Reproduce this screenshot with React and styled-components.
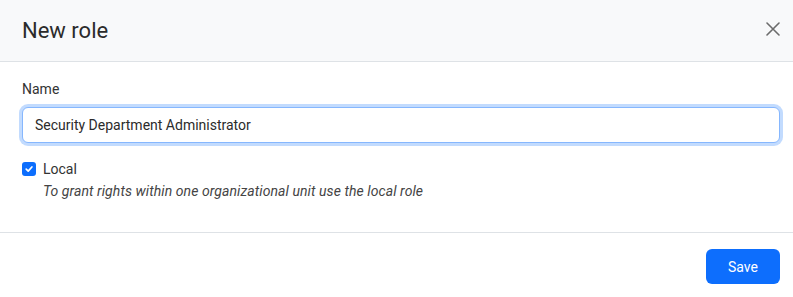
import styled, { createGlobalStyle } from "styled-components";

const GlobalStyle = createGlobalStyle`
  html, body {
    margin: 0;
    padding: 0;
    background: #ffffff;
  }

  body {
    font-family: Roboto, "Noto Sans", sans-serif;
    color: #212529;
  }

  * {
    box-sizing: border-box;
  }
`;

export default function App() {
  return (
    <>
      <GlobalStyle />
      <Modal>
        <Header>
          <Title>New role</Title>
          <CloseButton aria-label="Close">
            <svg width="14" height="14" viewBox="0 0 14 14">
              <path d="M1 1L13 13M13 1L1 13" stroke="#6c6c6c" strokeWidth="1.6" strokeLinecap="round" />
            </svg>
          </CloseButton>
        </Header>
        <Body>
          <Label htmlFor="role-name">Name</Label>
          <Input id="role-name" defaultValue="Security Department Administrator" />
          <Check>
            <Box>
              <svg width="10" height="10" viewBox="0 0 10 10">
                <path d="M2.2 5.2L4.2 7.1L7.9 3" stroke="#fff" strokeWidth="1.7" fill="none" strokeLinecap="round" strokeLinejoin="round" />
              </svg>
            </Box>
            <CheckText>
              <CheckLabel>Local</CheckLabel>
              <Hint>To grant rights within one organizational unit use the local role</Hint>
            </CheckText>
          </Check>
        </Body>
        <Footer>
          <SaveButton>Save</SaveButton>
        </Footer>
      </Modal>
    </>
  );
}

const Modal = styled.div`
  width: 793px;
  height: 297px;
  display: flex;
  flex-direction: column;
  background: #ffffff;
`;

const Header = styled.div`
  height: 62px;
  display: flex;
  align-items: center;
  justify-content: space-between;
  padding: 0 13px 1px 22px;
  background-color: #f8f9fa;
  border-bottom: 1px solid #dee2e6;
`;

const Title = styled.h1`
  margin: 0;
  font-size: 22px;
  font-weight: 400;
  line-height: 1.5;
  color: #2b2b2b;
`;

const CloseButton = styled.button`
  width: 14px;
  height: 14px;
  padding: 0;
  border: 0;
  display: flex;
  background: transparent;
  margin-top: -2px;
`;

const Body = styled.div`
  display: flex;
  flex-direction: column;
  padding: 17px 13px 30px 22px;
  border-bottom: 1px solid #dee2e6;
`;

const Label = styled.label`
  font-size: 14px;
  line-height: 21px;
  color: #333333;
  margin-bottom: 7px;
`;

const Input = styled.input`
  height: 36px;
  width: 100%;
  padding: 0 12px;
  font-family: inherit;
  font-size: 14px;
  color: #2b2b2b;
  border: 1px solid #86b7fe;
  border-radius: 6px;
  outline: none;
  box-shadow: 0 0 0 3px rgba(13, 110, 253, 0.25);
`;

const Check = styled.div`
  display: flex;
  gap: 7px;
  margin-top: 16px;
`;

const Box = styled.span`
  width: 14px;
  height: 14px;
  flex: none;
  margin-top: 3px;
  border-radius: 3px;
  background-color: #0d6efd;
  display: flex;
  align-items: center;
  justify-content: center;
`;

const CheckText = styled.div`
  display: flex;
  flex-direction: column;
`;

const CheckLabel = styled.span`
  font-size: 14px;
  line-height: 21px;
  color: #333333;
`;

const Hint = styled.span`
  margin-top: 1px;
  font-size: 14px;
  line-height: 21px;
  font-style: italic;
  letter-spacing: 0.08px;
  color: #444444;
`;

const Footer = styled.div`
  display: flex;
  justify-content: flex-end;
  padding: 16px 13px 0 22px;
`;

const SaveButton = styled.button`
  width: 74px;
  height: 35px;
  border: 0;
  border-radius: 6px;
  background-color: #0d6efd;
  color: #ffffff;
  font-family: inherit;
  font-size: 14px;
`;
